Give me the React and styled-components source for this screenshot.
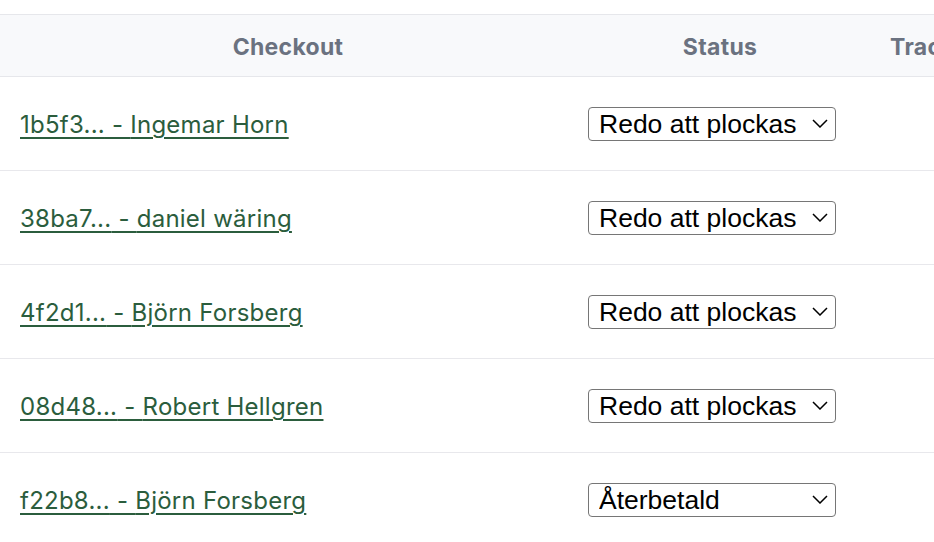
import React from "react";
import styled, { createGlobalStyle } from "styled-components";

const orders = [
  { id: "1b5f3...", name: "Ingemar Horn", status: "Redo att plockas" },
  { id: "38ba7...", name: "daniel wäring", status: "Redo att plockas" },
  { id: "4f2d1...", name: "Björn Forsberg", status: "Redo att plockas" },
  { id: "08d48...", name: "Robert Hellgren", status: "Redo att plockas" },
  { id: "f22b8...", name: "Björn Forsberg", status: "Återbetald" },
];

const statuses = ["Redo att plockas", "Plockad", "Skickad", "Återbetald"];

const App = () => {
  return (
    <>
      <GlobalStyle />
      <Page>
        <Table>
          <colgroup>
            <col style={{ width: 576 }} />
            <col style={{ width: 288 }} />
            <col style={{ width: 153 }} />
          </colgroup>
          <thead>
            <tr>
              <HeadCell>Checkout</HeadCell>
              <HeadCell>Status</HeadCell>
              <HeadCell>Tracking</HeadCell>
            </tr>
          </thead>
          <tbody>
            {orders.map((o, key) => (
              <Row key={key}>
                <Cell $pad={20}>
                  <OrderLink href="#">
                    {o.id} - {o.name}
                  </OrderLink>
                </Cell>
                <Cell $pad={12}>
                  <SelectWrap>
                    <StatusSelect defaultValue={o.status}>
                      {statuses.map((s) => (
                        <option key={s}>{s}</option>
                      ))}
                    </StatusSelect>
                    <Chevron viewBox="0 0 16 9">
                      <path d="M1 1 L8 8 L15 1" />
                    </Chevron>
                  </SelectWrap>
                </Cell>
                <Cell $pad={12} />
              </Row>
            ))}
          </tbody>
        </Table>
      </Page>
    </>
  );
};

export default App;

const GlobalStyle = createGlobalStyle`
  html, body {
    margin: 0;
    padding: 0;
    background: #ffffff;
    overflow: hidden;
  }
`;

const Page = styled.div`
  padding-top: 14px;
  width: 934px;
  overflow: hidden;
`;

const Table = styled.table`
  border-collapse: collapse;
  table-layout: fixed;
  width: 1017px;
  font-family: Inter, "Liberation Sans", sans-serif;
`;

const HeadCell = styled.th`
  height: 62px;
  padding: 3px 12px 0;
  background: #f8f9fb;
  border-top: 1.5px solid #e6e7eb;
  border-bottom: 1.5px solid #e6e7eb;
  color: #6b7280;
  font-size: 23px;
  font-weight: 700;
  letter-spacing: 0.3px;
  text-align: center;
  white-space: nowrap;
  box-sizing: border-box;
`;

const Row = styled.tr`
  height: 94px;
  border-bottom: 1.5px solid #e8e8ec;
`;

const Cell = styled.td`
  padding: 0 ${(p) => p.$pad}px;
  vertical-align: middle;
  white-space: nowrap;
`;

const OrderLink = styled.a`
  position: relative;
  top: 1px;
  color: #2b5d3d;
  font-size: 24px;
  letter-spacing: 0.25px;
  text-decoration: underline;
  text-underline-offset: 4px;
  text-decoration-thickness: 1.5px;
`;

const SelectWrap = styled.div`
  position: relative;
  width: 248px;
  height: 34px;
`;

const StatusSelect = styled.select`
  appearance: none;
  -webkit-appearance: none;
  width: 248px;
  height: 34px;
  box-sizing: border-box;
  padding: 1px 0 0 10px;
  border: 1.5px solid #767676;
  border-radius: 4px;
  background: #ffffff;
  color: #000000;
  font-family: "Liberation Sans", Arial, sans-serif;
  font-size: 26.5px;
`;

const Chevron = styled.svg`
  position: absolute;
  right: 8px;
  top: 12px;
  width: 16px;
  height: 9px;
  pointer-events: none;
  fill: none;
  stroke: #000000;
  stroke-width: 1.5;
`;
